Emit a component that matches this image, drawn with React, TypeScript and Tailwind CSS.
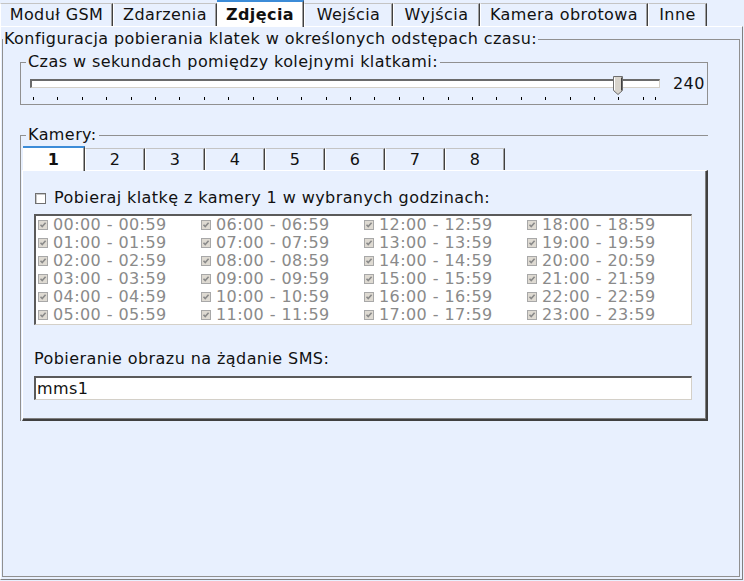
import React from "react";

type Tab = { label: string; width: string; active?: boolean };

const MAIN_TABS: Tab[] = [
  { label: "Moduł GSM", width: "w-[113px]" },
  { label: "Zdarzenia", width: "w-[104px]" },
  { label: "Zdjęcia", width: "w-[87px]", active: true },
  { label: "Wejścia", width: "w-[89px]" },
  { label: "Wyjścia", width: "w-[87px]" },
  { label: "Kamera obrotowa", width: "w-[168px]" },
  { label: "Inne", width: "w-[59px]" },
];

const CAMERAS = ["1", "2", "3", "4", "5", "6", "7", "8"];

const HOURS = Array.from({ length: 24 }, (_, h) => {
  const hh = String(h).padStart(2, "0");
  return `${hh}:00 - ${hh}:59`;
});

const SLIDER_MAX = 255;
const SLIDER_VALUE = 240;
const TICK_SPAN = 622;
const TICKS = [...Array.from({ length: 26 }, (_, i) => i * 10), SLIDER_MAX];

const edgeRight = "border-r border-r-[#404040] shadow-[inset_-1px_0_0_#a0a0a0]";

function MainTab({ tab }: { tab: Tab }) {
  if (tab.active) {
    return (
      <div
        className={`${tab.width} ${edgeRight} relative z-10 -mb-px flex h-[27px] items-center justify-center border-t-2 border-t-[#3c8cd8] bg-white font-bold`}
      >
        {tab.label}
      </div>
    );
  }
  return (
    <div
      className={`${tab.width} ${edgeRight} flex h-[23px] items-center justify-center border-t border-l border-t-[#c4c4c4] border-l-white`}
    >
      {tab.label}
    </div>
  );
}

function CameraTab({ label, active }: { label: string; active: boolean }) {
  if (active) {
    return (
      <div
        className={`${edgeRight} relative z-10 -mb-px flex h-[25px] w-[62px] items-center justify-center border-t-2 border-t-[#3c8cd8] bg-white font-bold`}
      >
        {label}
      </div>
    );
  }
  return (
    <div
      className={`${edgeRight} flex h-[22px] w-[60px] items-center justify-center border-t border-l border-t-[#c4c4c4] border-l-white`}
    >
      {label}
    </div>
  );
}

function DisabledCheck() {
  return (
    <svg width="10" height="10" viewBox="0 0 10 10" className="shrink-0">
      <rect x="0.5" y="0.5" width="9" height="9" fill="#dedad2" stroke="#a8a8a8" />
      <path d="M2.5 4.8 L4.2 6.6 L7.6 2.8" fill="none" stroke="#8a8a8a" strokeWidth="1.6" />
    </svg>
  );
}

function Slider() {
  const thumbLeft = 3 + (SLIDER_VALUE / SLIDER_MAX) * TICK_SPAN - 7;
  return (
    <div className="ml-[9px] mt-[8px]">
      <div className="flex h-[9px] items-center">
        <div className="relative h-[9px] w-[630px] border-t-2 border-l-2 border-t-[#6a6a6a] border-l-[#6a6a6a] border-b border-r border-b-[#d4d0c8] border-r-[#d4d0c8] bg-white">
          <svg
            width="10"
            height="19"
            viewBox="0 0 10 19"
            className="absolute top-[-5px]"
            style={{ left: thumbLeft }}
          >
            <path d="M0.5 0.5 H9.5 V14.5 L5 18.5 L0.5 14.5 Z" fill="#d8d4cc" stroke="#6e6e6e" />
            <path d="M1.5 1.5 V14" stroke="#ffffff" />
            <path d="M8.5 1.5 V14.5" stroke="#404040" />
          </svg>
        </div>
        <span className="ml-[13px] leading-[18px]">{SLIDER_VALUE}</span>
      </div>
      <div className="relative mt-[9px] h-[3px] w-[630px]">
        {TICKS.map((t) => (
          <div
            key={t}
            className="absolute top-0 h-[3px] w-px bg-black"
            style={{ left: 3 + (t / SLIDER_MAX) * TICK_SPAN }}
          />
        ))}
      </div>
    </div>
  );
}

export default function App() {
  return (
    <div className="h-[581px] w-[744px] overflow-hidden bg-[#e8f0fe] font-['DejaVu_Sans',sans-serif] text-[16px] tracking-[0.42px] text-[#111]">
      <div className="flex h-[26px] items-end">
        {MAIN_TABS.map((t) => (
          <MainTab key={t.label} tab={t} />
        ))}
      </div>

      <div className="h-[554px] w-[743px] border border-t-white border-l-white border-r-[#808080] border-b-[#808080] pt-[3px]">
        <fieldset className="ml-[1px] h-[547px] w-[738px] border border-[#909090]">
          <legend className="px-[1px] leading-[18px]">
            Konfiguracja pobierania klatek w określonych odstępach czasu:
          </legend>

          <fieldset className="ml-[17px] mt-[5px] w-[688px] border border-[#909090] pb-[4px]">
            <legend className="ml-[5px] px-[2px] leading-[18px]">
              Czas w sekundach pomiędzy kolejnymi klatkami:
            </legend>
            <Slider />
          </fieldset>

          <fieldset className="ml-[17px] mt-[21px] w-[688px] border-t border-l border-[#909090]">
            <legend className="ml-[5px] px-[2px] leading-[18px]">Kamery:</legend>

            <div className="ml-[2px] flex h-[26px] items-end">
              {CAMERAS.map((c) => (
                <CameraTab key={c} label={c} active={c === "1"} />
              ))}
            </div>

            <div className="ml-[1px] h-[251px] w-[686px] border-l border-t border-l-white border-t-white border-r-2 border-b-2 border-r-[#404040] border-b-[#404040] pl-[11px] pt-[18px] shadow-[inset_-1px_-1px_0_#808080]">
              <label className="flex h-[18px] items-center">
                <span className="ml-[1px] h-[11px] w-[11px] border border-[#707070] bg-white shadow-[inset_1px_1px_0_#c8c8c8]" />
                <span className="ml-[8px]">Pobieraj klatkę z kamery 1 w wybranych godzinach:</span>
              </label>

              <div className="mt-[7px] grid h-[111px] w-[658px] grid-flow-col grid-cols-[163px_163px_163px_1fr] grid-rows-[repeat(6,18px)] border-t-2 border-l-2 border-t-[#5a5a5a] border-l-[#5a5a5a] border-b border-r border-b-[#d4d0c8] border-r-[#d4d0c8] bg-white pl-[2px]">
                {HOURS.map((h) => (
                  <div key={h} className="flex items-center gap-[5px] text-[#8a8a8a]">
                    <DisabledCheck />
                    <span>{h}</span>
                  </div>
                ))}
              </div>

              <div className="mt-[25px] leading-[18px]">Pobieranie obrazu na żądanie SMS:</div>
              <input
                readOnly
                value="mms1"
                className="mt-[8px] block h-[24px] w-[658px] border-t-2 border-l-2 border-t-[#5a5a5a] border-l-[#5a5a5a] border-b border-r border-b-[#d4d0c8] border-r-[#d4d0c8] bg-white pl-[1px] outline-none"
              />
            </div>
          </fieldset>
        </fieldset>
      </div>
    </div>
  );
}
